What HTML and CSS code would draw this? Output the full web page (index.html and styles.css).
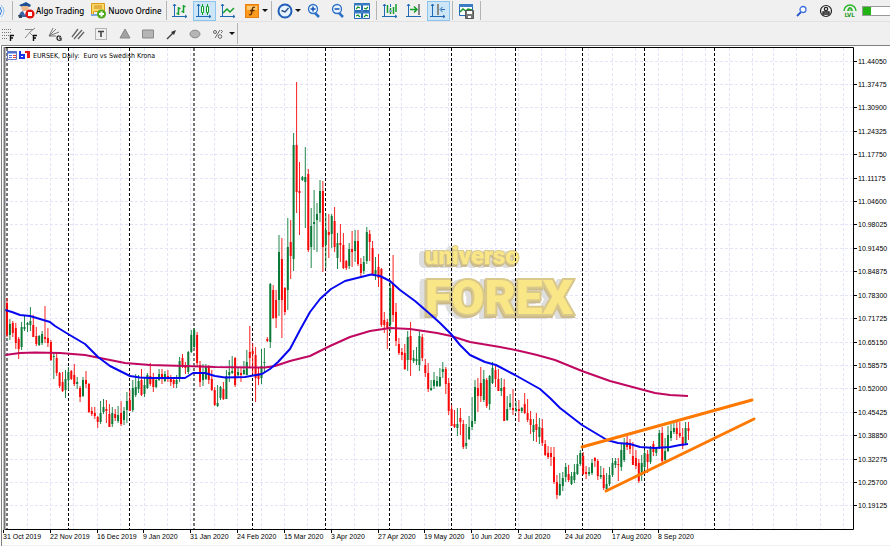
FILE: index.html
```html
<!DOCTYPE html>
<html lang="it">
<head>
<meta charset="utf-8">
<title>EURSEK, Daily</title>
<link rel="stylesheet" href="styles.css">
</head>
<body>
<header class="bars">
  <div class="bar">
    <button class="pulse" aria-label="Signals"><svg width="8" height="16" viewBox="0 0 8 16" fill="none"><path d="M0 4q3 4 0 8" stroke="#2f7fe0"/><path d="M1 2q6 6 0 12" stroke="#8fc0f5"/></svg></button>
    <i class="sep"></i>
    <button class="wide"><svg width="17" height="17" viewBox="0 0 17 17"><path d="M1 3 8 1l5 3-2 1H4z" fill="#234a86"/><circle cx="7" cy="6" r="3.6" fill="#f0b98c"/><path d="M3 4h9l1-1-5-3-6 3z" fill="#1f5096"/><path d="M1 15q0-5 4-6h5l2 3v3z" fill="#3a66a8"/><path d="M5 9l2 4 2-4z" fill="#fff"/><path d="M0 13h4v3H1z" fill="#33445c"/><circle cx="12" cy="12" r="4.6" fill="#e3120e"/><rect x="10" y="10" width="4" height="4" fill="#fff"/></svg><span>Algo Trading</span></button>
    <button class="wide"><svg width="17" height="17" viewBox="0 0 17 17"><path d="M1.5 1.5h13v8h-11v3h-2z" fill="#ffd968" stroke="#d99a1c"/><path d="M4 4h8M4 6h8" stroke="#c9861b"/><path d="M1 13h8" stroke="#7ca6d8" stroke-width="2"/><circle cx="11.500" cy="12" r="4.500" fill="#4faa20"/><path d="M11.500 9.500v5M9 12h5" stroke="#fff" stroke-width="2"/></svg><span>Nuovo Ordine</span></button>
    <i class="sep"></i>
    <button class="tool" aria-label="Bar chart"><svg width="16" height="16" viewBox="0 0 16 16" fill="none"><path d="M2.500 1v13M0 13.500h15M1 3l1.500-2L4 3M13 12l2 1.500L13 15" stroke="#2069b4"/><path d="M6.500 4v8M4.500 10.500h2M6.500 5.500h2M11.500 2v8M9.500 8.500h2M11.500 3.500h2" stroke="#14a02c" stroke-width="1.500"/></svg></button>
    <button class="tool on" aria-label="Candlesticks"><svg width="16" height="16" viewBox="0 0 16 16" fill="none"><path d="M2.500 1v13M0 13.500h15M1 3l1.500-2L4 3M13 12l2 1.500L13 15" stroke="#2069b4"/><path d="M6.500 1v11M11.500 1v11" stroke="#14a02c"/><path d="M5.500 3.500h2v6h-2zM10.500 3.500h2v6h-2z" fill="#fff" stroke="#14a02c"/></svg></button>
    <button class="tool" aria-label="Line chart"><svg width="16" height="16" viewBox="0 0 16 16" fill="none"><path d="M2.500 1v13M0 13.500h15M1 3l1.500-2L4 3M13 12l2 1.500L13 15" stroke="#2069b4"/><path d="M3 10 7 6l3 3 4-4" stroke="#14a02c" stroke-width="1.500"/></svg></button>
    <button class="tool" aria-label="Indicators"><svg width="14" height="14" viewBox="0 0 14 14" fill="none"><rect x=".5" y=".5" width="13" height="13" fill="#fb9a1c" stroke="#e88010"/><path d="M2 2h10v4H2z" fill="#ffc872"/><path d="M10 3.500q-2-1-2.500 1l-1 5q-.5 2-2.500 1M5 6.500h4.500" stroke="#5a2c00" stroke-width="1.300"/></svg></button>
    <button class="drop" aria-label="Indicator list"></button>
    <i class="sep"></i>
    <button class="tool" aria-label="Timeframes"><svg width="16" height="16" viewBox="0 0 16 16" fill="none"><circle cx="8" cy="8" r="6.500" fill="#e8f3ff" stroke="#1f5fb8" stroke-width="2"/><path d="M4.500 7.500 8 9l3.500-4" stroke="#2c4f80" stroke-width="1.400"/></svg></button>
    <button class="drop" aria-label="Timeframe list"></button>
    <button class="tool" aria-label="Zoom in"><svg width="14" height="16" viewBox="0 0 14 16" fill="none"><path d="m8 10 4 4" stroke="#2c70c8" stroke-width="2.500"/><circle cx="6" cy="6" r="4.500" fill="#e9f4ff" stroke="#2c70c8" stroke-width="1.300"/><path d="M6 3.500v5M3.500 6h5" stroke="#1553b4" stroke-width="1.500"/></svg></button>
    <button class="tool" aria-label="Zoom out"><svg width="14" height="16" viewBox="0 0 14 16" fill="none"><path d="m8 10 4 4" stroke="#2c70c8" stroke-width="2.500"/><circle cx="6" cy="6" r="4.500" fill="#e9f4ff" stroke="#2c70c8" stroke-width="1.300"/><path d="M3.500 6h5" stroke="#1553b4" stroke-width="1.500"/></svg></button>
    <button class="tool" aria-label="Tile windows"><svg width="16" height="16" viewBox="0 0 16 16" fill="none"><path d="M.5.500h7v7h-7zM8.500.500h7v7h-7zM.5 8.500h7v7h-7zM8.500 8.500h7v7h-7z" fill="#fff" stroke="#2368b4"/><path d="M0 1.500h16M0 9.500h16" stroke="#3b7cc4" stroke-width="2"/><path d="m2 6 2-2 2 1M10 5l2 1 2-2M2 13l2-1 2 2M10 14l2-2 2 1" stroke="#19922a" stroke-width="1.300"/></svg></button>
    <i class="sep"></i>
    <button class="tool" aria-label="Auto scroll"><svg width="16" height="16" viewBox="0 0 16 16" fill="none"><path d="M2.500 1v13M0 13.500h15M1 3l1.500-2L4 3M13 12l2 1.500L13 15" stroke="#2069b4"/><path d="M5.500 2v8M8.500 5v2M8.500 9v2M11.500 4v7M14 1v8" stroke="#14a02c" stroke-width="1.500"/><path d="M8.500 1v3M7 8h3" stroke="#2069b4"/></svg></button>
    <button class="tool" aria-label="Scroll to end"><svg width="16" height="16" viewBox="0 0 16 16" fill="none"><path d="M2.500 1v13M0 13.500h15M1 3l1.500-2L4 3" stroke="#2069b4"/><path d="M4 6.500h7M8 3.500l3 3-3 3" stroke="#14a02c" stroke-width="1.500"/><path d="M13 1v11" stroke="#888" stroke-width="2"/></svg></button>
    <button class="tool on" aria-label="Chart shift"><svg width="16" height="16" viewBox="0 0 16 16" fill="none"><path d="M2.500 1v13M0 13.500h15M1 3l1.500-2L4 3M13 12l2 1.500L13 15M15 6.500h-4M12.500 4l-2.500 2.500L12.500 9" stroke="#2069b4"/><path d="M8 1v11" stroke="#888" stroke-width="2"/></svg></button>
    <i class="sep"></i>
    <button class="tool" aria-label="Templates"><svg width="16" height="16" viewBox="0 0 16 16" fill="none"><path d="M1.500 1.500h13v11h-13z" fill="#fff" stroke="#2368b4"/><path d="M1 2.500h14" stroke="#3b7cc4" stroke-width="3"/><path d="M2 9l3-3 3 2 2-2 4 1" stroke="#19922a" stroke-width="1.500"/><path d="M7.500 7.500h8v8h-8z" fill="#777" stroke="#555"/><path d="M9 8h5v3H9zM10 13h3v2h-3z" fill="#fff"/></svg></button>
    <i class="sep"></i>
    <div class="account">
      <button class="tool" aria-label="Search"><svg width="12" height="12" viewBox="0 0 12 12" fill="none"><path d="m5 7-4 4" stroke="#2456c8" stroke-width="1.800"/><circle cx="7" cy="4.500" r="3" fill="#fff" stroke="#3f6fe0" stroke-width="1.300"/></svg></button>
      <button class="tool" aria-label="Profile"><svg width="14" height="14" viewBox="0 0 14 14" fill="none"><circle cx="7" cy="7" r="5.500" stroke="#222" stroke-width="1.200"/><circle cx="7" cy="5" r="1.700" stroke="#222" stroke-width="1.200"/><path d="M4 10V8h6v2z" stroke="#222" stroke-width="1.300"/></svg></button>
      <button class="tool level" aria-label="Level"><svg width="14" height="9" viewBox="0 0 14 9" fill="none"><path d="M1 8a6 6 0 1 1 12 0" stroke="#2eb52e" stroke-width="1.500"/><path d="M4 8q1-4 3-4t3 4z" fill="#2eb52e"/><path d="M7 6v2" stroke="#efefef"/></svg><span>LVL</span></button>
      <div class="gauge"></div>
    </div>
  </div>
  <div class="bar second">
    <div class="drawing">
      <button aria-label="Fibonacci retracement"><svg width="14" height="14" viewBox="0 0 14 14" fill="none"><path d="M1 2.500h10M1 5.500h10M1 8.500h7M1 11.500h6" stroke="#777" stroke-dasharray="1 1"/><path d="M9.500 14V8.500H13M9.500 11H12" stroke="#111" stroke-width="1.400"/></svg></button>
      <button aria-label="Fibonacci fan"><svg width="14" height="14" viewBox="0 0 14 14" fill="none"><path d="m1 11 5-6 5-4M5 5l4 4M1 2.500h8" stroke="#888"/><path d="M9.500 14V8.500H13M9.500 11H12" stroke="#111" stroke-width="1.400"/></svg></button>
      <button aria-label="Gann fan"><svg width="14" height="14" viewBox="0 0 14 14" fill="none"><path d="M1 9 5 1M1 9l7-7M1 9l10-4M1 9h7" stroke="#777"/><path d="M13 9.500q-4-1.500-4 1.500t4 2v-2h-2" stroke="#111" stroke-width="1.200"/></svg></button>
      <button aria-label="Channel"><svg width="14" height="12" viewBox="0 0 14 12" fill="none"><path d="M1 9 7 1M3 11l8-9M7 11l6-7" stroke="#666" stroke-width="1.300"/></svg></button>
      <button aria-label="Text"><svg width="12" height="12" viewBox="0 0 12 12" fill="none"><rect x=".5" y=".5" width="11" height="11" stroke="#777" stroke-dasharray="1 1"/><path d="M3 3.500h6M6 3v6" stroke="#444" stroke-width="1.600"/></svg></button>
      <button aria-label="Triangle"><svg width="12" height="11" viewBox="0 0 12 11"><path d="m6 1 5 9H1z" fill="#a2a2a2" stroke="#888"/></svg></button>
      <button aria-label="Rectangle"><svg width="12" height="10" viewBox="0 0 12 10"><path d="M.5 1h11v8H.5z" fill="#b5b5b5" stroke="#888"/></svg></button>
      <button aria-label="Arrow"><svg width="12" height="12" viewBox="0 0 12 12"><path d="m1 11 6-6" stroke="#444" stroke-width="1.500"/><path d="m10 2-2 5-3-3z" fill="#333"/></svg></button>
      <button aria-label="Ellipse"><svg width="12" height="10" viewBox="0 0 12 10"><ellipse cx="6" cy="5" rx="5" ry="3.800" fill="#b5b5b5" stroke="#888"/></svg></button>
      <button aria-label="Objects"><svg width="12" height="12" viewBox="0 0 12 12" fill="none" stroke="#666"><circle cx="3" cy="4" r="1.500"/><circle cx="8" cy="8.500" r="1.800"/><path d="M3 10 8 2M9 2l1.500 1.500L9 5"/></svg></button>
    </div>
    <button class="drop" aria-label="Object list"></button>
    <i class="sep"></i>
  </div>
</header>
<main>
  <svg id="chart" class="chart" viewBox="0 45 890 501" role="img" aria-label="EURSEK daily chart">
    <path class="edge" d="M1.500 546V45.500H890"/>
    <path class="foot" d="M2 545.500H890"/>
    <g id="grid" class="grid"></g>
    <g class="logo">
      <text class="small" x="425" y="264">universo</text>
      <text class="big" x="425" y="314">FOREX</text>
    </g>
    <g id="periods" class="periods"></g>
    <g id="candles"></g>
    <path class="slow" d="M5 355L20 353 35 352.500 60 353 85 355 100 358 125 363 150 365 185 366 215 367 265 367.500 275 366 290 361 310 356 330 346 350 337 370 331 390 328 410 329 437 333 451 336 470 342 500 347 520 351 537 355 555 360 582 371 610 381 640 389 655 393 670 395 688 396"/>
    <path class="fast" d="M5 310L12 312 20 315 30 316 40 319 50 322 55 326 68 334 85 344 98 357 110 366 120 371 130 376 140 377.500 150 378 185 378 193 373 205 373 215 376 225 377.500 245 377 262 374 270 369 278 362 290 349 300 330 310 312 320 299 331 289 345 281 361 277 371 274.500 380 276 390 281 400 290 415 301 430 314 440 323 451 334 460 345 470 355 485 362 496 365 515 375 540 389 550 398 560 408 582 425 607 440 618 443 630 444 640 447 655 448 670 447 680 445 688 444"/>
    <path class="trend" d="M582 447 752 400M606 491 754 419"/>
    <path class="frame" d="M5 47.500H853.500V529.500H5"/>
    <path class="side" d="M4.500 47V530"/>
    <g id="labels" class="labels"></g>
    <g class="caption">
      <path d="M7.500 51.500h9v8h-9z" fill="#fff" stroke="#6a78c0"/><path d="M7 52.500h10" stroke="#4a70d8" stroke-width="2"/><path d="M9 55.500h3M9 57.500h3" stroke="#4a70d8"/><path d="M13 55.500h3M13 57.500h3" stroke="#e04040"/>
      <path d="M20 51v7h4v-3h-4" fill="none" stroke="#1836e8" stroke-width="2"/><path d="M25 52h3v6M29 51v7" fill="none" stroke="#e81818" stroke-width="2"/>
      <text x="33" y="58" xml:space="preserve">EURSEK, Daily:  Euro vs Swedish Krona</text>
    </g>
  </svg>
</main>
<script src="chart.js"></script>
</body>
</html>
```
FILE: styles.css
```css
* { box-sizing: border-box; }
body {
  margin: 0;
  background: #fff;
  font-family: "DejaVu Sans Condensed", "DejaVu Sans", sans-serif;
  overflow: hidden;
}
button {
  display: flex;
  align-items: center;
  justify-content: center;
  flex: none;
  padding: 0;
  border: 0;
  background: none;
  color: #000;
  font: inherit;
}
svg { display: block; flex: none; }
.bars { background: #f0f0f0; }
.bar {
  display: flex;
  align-items: center;
  gap: 1px;
  height: 22px;
  border-bottom: 1px solid #e2e2e2;
}
.second { height: 23px; gap: 0; border-bottom: 0; }
.sep {
  flex: none;
  align-self: stretch;
  width: 1px;
  margin: 1px;
  background: #b4b4b4;
}
.pulse { width: 10px; justify-content: flex-start; }
.wide {
  gap: 1px;
  padding: 0 2px 0 3px;
  font-family: "Noto Sans", sans-serif;
  font-size: 8px;
  font-weight: 500;
  white-space: nowrap;
}
.tool { width: 23px; height: 20px; }
.on { background: #cce6f8; border: 1px solid #8cc4ee; }
.drop { width: 8px; height: 20px; margin-left: -4px; }
.drop::before {
  content: "";
  border: 3px solid transparent;
  border-top-color: #111;
  border-bottom: 0;
}
.account {
  display: flex;
  align-items: center;
  gap: 1px;
  margin-left: auto;
}
.level {
  flex-direction: column;
  color: #2a9a2a;
  font-size: 6px;
  font-weight: bold;
  line-height: 6px;
}
.gauge {
  width: 28px;
  height: 10px;
  border: 1px solid #999;
  border-right: 0;
  background: linear-gradient(90deg, #22b414 8px, #fff 8px);
}
.drawing { display: flex; width: 234px; margin-left: -4px; }
.drawing button { flex: 1; }
.second .drop { margin-left: -2px; }

.chart { width: 100%; height: auto; }
.edge { fill: none; stroke: #808080; stroke-width: 1; }
.foot { stroke: #f0f0f0; }
.frame { fill: none; stroke: #000; stroke-width: 1; }
.side { stroke: #777; stroke-width: 2; }
.grid { stroke: #e4e4f8; stroke-dasharray: 3 2; }
.periods { stroke: #000; stroke-dasharray: 3 2; }
.periods .year { stroke: #777; stroke-width: 2; }
.up { stroke: #0b7a38; }
.down { stroke: #f80808; }
.wick { opacity: .9; }
.body { stroke-width: 2; }
.slow, .fast, .trend { fill: none; stroke-linejoin: round; }
.slow { stroke: #c00860; stroke-width: 2; }
.fast { stroke: #0808f0; stroke-width: 2; }
.trend { stroke: #ff7800; stroke-width: 3; stroke-linecap: round; }
.labels { font-size: 7px; font-family: "Liberation Sans", sans-serif; }
.labels path { stroke: #000; }
.caption { font-size: 7px; }
.logo {
  font-family: Roboto, sans-serif;
  font-weight: 900;
  paint-order: stroke;
  stroke-linejoin: miter;
  fill: #f9e686;
  stroke: #d9c88c;
  filter: drop-shadow(-1px 2px 0 #cbbb8c) drop-shadow(-5px 1px 0 #dedede);
}
.small { font-size: 24px; stroke-width: 2; }
.big { font-size: 48px; stroke-width: 4; }
```
FILE: chart.js
```js
// One entry per day: direction, high, body top, body bottom, low.
const days = `r298 303 335 337,g319 324 335 340,r321 323 333 337,r323 328 343 349,r337 339 349 359,g322 327 347 350,g316 327 329 331,g322 323 325 332,g307 321 325 331,r315 325 337 337,r327 336 344 346,g335 336 345 346,g331 334 343 345,r306 337 339 343,r328 338 343 347,r340 342 360 361,g352 356 357 379,r352 358 373 376,r372 373 386 388,r372 382 391 392,g370 379 390 398,g367 372 380 390,r370 371 379 380,r364 375 384 386,g377 382 384 389,r386 388 397 402,g377 380 396 397,r371 380 384 388,r383 384 412 413,r407 411 414 416,r407 413 416 419,r416 417 422 428,g401 413 422 424,g399 407 412 414,r400 409 411 423,r404 414 427 427,g407 413 424 427,r409 414 418 421,g406 415 421 423,r401 413 424 426,g407 411 420 425,g392 401 410 423,r390 400 411 411,g380 388 410 412,g374 387 395 397,g375 381 389 393,r369 380 395 396,g378 385 394 397,g373 375 388 389,r363 376 384 386,r373 378 387 392,g378 380 387 388,g369 374 380 381,r369 374 377 384,g371 374 381 382,r370 376 378 382,r375 378 382 386,r378 380 384 388,g375 380 384 388,g357 361 379 382,r354 358 366 368,r362 366 368 374,g351 352 372 374,g330 335 352 353,g328 330 347 348,r332 335 363 366,r361 365 382 387,g364 374 380 386,g364 366 379 380,r365 367 380 384,r370 379 390 391,r387 390 405 406,g385 403 406 407,g386 387 398 400,r382 389 399 400,g370 376 399 399,g360 372 375 382,g356 371 373 374,r357 358 385 387,g367 372 375 377,r367 373 375 382,g361 370 374 375,g350 362 375 375,r326 352 358 368,r343 351 354 374,r347 355 378 402,r368 373 379 385,g349 366 378 384,g348 362 363 373,r337 339 341 342,g283 284 342 348,r285 290 318 319,r290 300 318 328,g235 252 300 316,r238 259 300 338,r287 288 312 315,g218 247 290 310,r220 242 256 279,g133 145 259 271,r82 145 192 213,r162 191 193 235,g176 177 180 181,g147 177 182 228,r169 174 250 252,g208 226 247 268,g190 222 224 250,g203 214 220 252,g180 191 213 222,r181 191 247 272,g213 230 245 268,r214 232 235 258,g214 216 234 248,r207 221 247 252,g233 243 258 269,r224 243 245 262,r233 245 268 269,r260 261 268 270,g243 249 266 269,r231 249 252 267,g230 241 251 262,r230 241 264 266,r258 264 273 278,g256 262 271 274,g227 232 261 264,r230 234 242 261,r241 248 274 275,g257 270 274 280,r254 267 278 287,r268 269 325 327,r312 320 325 333,r319 322 329 349,g281 288 325 333,r255 284 315 322,r303 312 341 346,r338 344 353 355,r348 352 355 360,r344 353 369 370,g331 337 360 371,r322 336 360 376,g350 358 361 363,g347 359 361 365,g330 336 365 371,r334 337 358 361,r359 365 373 377,r363 373 389 392,g380 388 390 391,g372 380 386 389,g376 381 386 387,g368 377 386 387,g362 369 372 378,r367 369 384 394,r378 383 411 415,r405 409 426 426,r410 424 427 428,g408 424 428 436,r408 418 422 435,r420 424 447 449,g424 443 446 449,g416 427 439 440,g397 421 427 430,g380 387 421 424,r378 388 396 412,r367 383 396 402,g370 379 400 402,r378 380 406 408,g375 376 404 410,g362 368 383 384,r364 370 379 387,r369 379 391 391,g378 388 391 396,r379 387 421 421,g396 409 420 421,g394 403 407 410,r389 408 410 415,g401 409 411 412,r400 409 411 422,g407 408 411 413,r393 404 413 414,r399 413 420 422,r411 419 425 434,g419 425 432 441,r413 424 430 442,g418 427 437 444,r419 428 443 446,r440 444 455 456,r446 453 457 459,r447 453 457 466,r447 457 482 484,r475 482 495 499,g473 484 495 496,g472 478 486 491,g463 467 477 482,r465 474 480 482,g472 476 484 485,g464 472 480 483,g455 464 474 475,g450 453 464 466,r452 456 474 475,r466 472 474 479,g467 472 474 476,g459 463 473 475,r457 458 461 467,r459 461 476 480,g466 475 477 479,r468 475 488 490,g473 484 489 490,g467 475 484 486,g458 463 475 477,g458 461 465 468,r458 464 465 481,g443 450 467 471,g438 443 460 462,r436 442 447 450,r439 443 449 454,r442 456 465 465,r450 458 466 469,r459 463 481 483,g455 463 475 481,g450 453 467 470,r450 454 462 473,g446 448 462 464,r441 444 452 456,g447 447 453 456,g430 433 447 449,r427 433 461 463,g438 451 460 462,g426 435 451 452,g424 431 438 441,g422 428 432 434,r421 428 434 440,r422 433 436 438,r428 437 446 449,g422 428 443 444,r422 428 431 440`.split(",");

const first = 7, pitch = 2.925;
const fill = (id, html) => { document.getElementById(id).innerHTML = html; };
const line = (d, cls = "") => `<path class="${cls}" d="${d}"/>`;

fill("candles", days.map((day, i) => {
  const x = (first + i * pitch).toFixed(1);
  const side = day[0] === "g" ? "up" : "down";
  const [high, top, bottom, low] = day.slice(1).split(" ");
  return line(`M${x} ${high}V${low}`, side + " wick") + line(`M${x} ${top}V${bottom}`, side + " body");
}).join(""));

const prices = Array.from({ length: 20 }, (_, i) => ({
  y: Math.floor(61 + i * 23.42) + 0.5,
  text: (11.4405 - i * 0.06575).toFixed(5)
}));
const dates = ["31 Oct 2019", "22 Nov 2019", "16 Dec 2019", "9 Jan 2020", "31 Jan 2020", "24 Feb 2020", "15 Mar 2020", "3 Apr 2020", "27 Apr 2020", "19 May 2020", "10 Jun 2020", "2 Jul 2020", "24 Jul 2020", "17 Aug 2020", "8 Sep 2020"];
const dateX = i => Math.floor(3.6 + i * 46.8) + 0.5;

const columns = [];
for (let i = 0; i < 32; i++) columns.push(Math.floor(27 + i * 23.4) + 0.5);
columns.push(773.5, 796.5, 820.5, 843.5);
fill("grid",
  columns.map(x => line(`M${x} 48V529`)).join("") +
  prices.map(p => line(`M5 ${p.y}H853`)).join(""));

fill("periods",
  [68.5, 129.5, 252.5, 325.5, 389.5, 451.5, 515.5, 582.5, 644.5, 714.5].map(x => line(`M${x} 48V529`)).join("") +
  [7, 194].map(x => line(`M${x} 48V529`, "year")).join(""));

fill("labels",
  prices.map(p => line(`M854 ${p.y}h3`) + `<text x="858" y="${p.y + 2.5}">${p.text}</text>`).join("") +
  dates.map((t, i) => line(`M${dateX(i)} 530v3`) + `<text x="${dateX(i) - 0.5}" y="539">${t}</text>`).join(""));
```
